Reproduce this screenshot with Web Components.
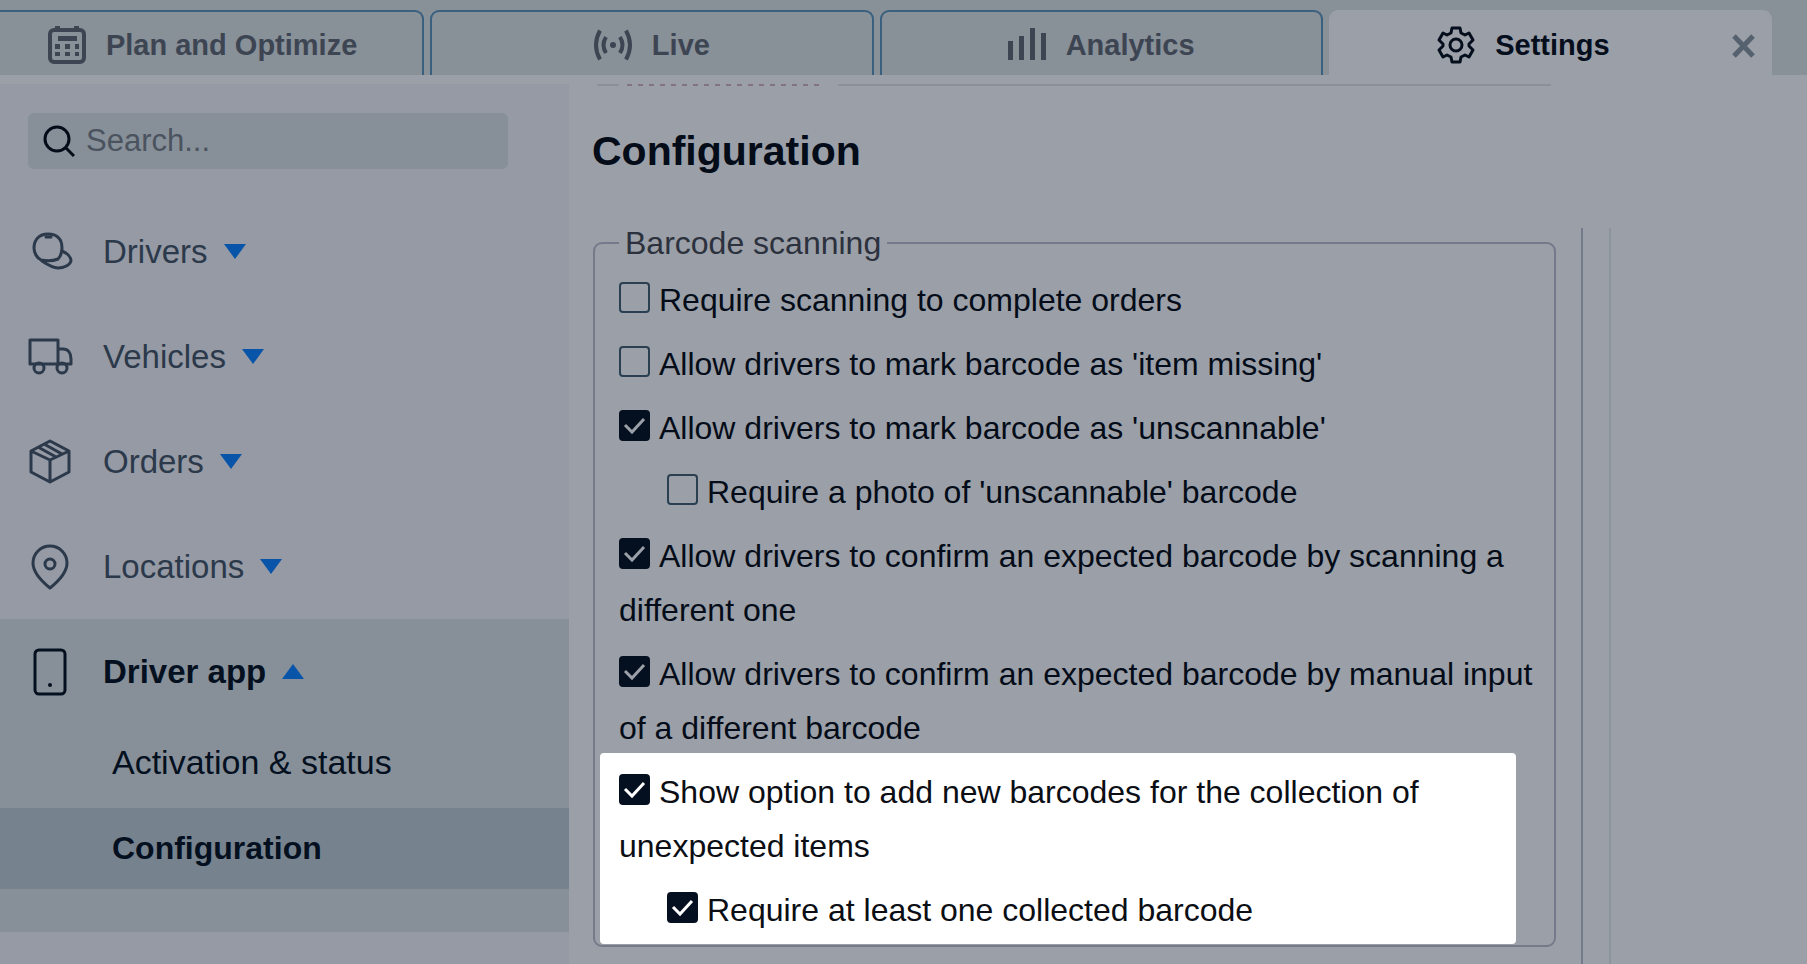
<!DOCTYPE html>
<html lang="en">
<head>
<meta charset="utf-8">
<title>Settings - Configuration</title>
<style>
  html, body { height: 100%; margin: 0; }
  body {
    background: #9b9fa7;
    color: #030c18;
    font-family: "Liberation Sans", Arial, Helvetica, sans-serif;
    overflow: hidden;
  }
</style>
</head>
<body>
<settings-app></settings-app>

<script>
const icons = {
  plan: `<rect x="2" y="4" width="34" height="32" rx="4" fill="none" stroke="currentColor" stroke-width="4"/>
    <g fill="currentColor"><rect x="7" y="0" width="5" height="5"/><rect x="26" y="0" width="5" height="5"/><rect x="10" y="10" width="19" height="5"/>
    <rect x="7" y="18" width="5" height="5"/><rect x="17" y="18" width="5" height="5"/><rect x="27" y="18" width="4" height="5"/>
    <rect x="7" y="26" width="5" height="4"/><rect x="17" y="26" width="5" height="4"/><rect x="27" y="26" width="4" height="4"/></g>`,
  live: `<circle cx="19" cy="19" r="3" fill="currentColor"/>
    <g fill="none" stroke="currentColor" stroke-width="4"><path d="M12 11q-5 8 0 16M26 11q5 8 0 16M6 4.500q-8 14.500 0 29M32 4.500q8 14.500 0 29"/></g>`,
  analytics: `<g fill="currentColor"><rect x="0" y="15" width="5" height="19"/><rect x="11" y="10" width="5" height="24"/><rect x="22" y="2" width="5" height="32"/><rect x="33" y="7" width="5" height="27"/></g>`,
  settings: `<g fill="none" stroke="currentColor" stroke-width="3" stroke-linejoin="round"><circle cx="19" cy="19" r="6"/>
    <path d="M15 2h8l1 5 4 2 4-2 4 7-4 4v2l4 4-4 7-4-2-4 2-1 5h-8l-1-5-4-2-4 2-4-7 4-4v-2l-4-4 4-7 4 2 4-2z"/></g>`,
  search: `<g fill="none" stroke="currentColor" stroke-width="3"><circle cx="14" cy="14" r="12"/><path d="M23 23l8 8"/></g>`,
  drivers: `<g fill="none" stroke="currentColor" stroke-width="3" stroke-linecap="round" stroke-linejoin="round">
    <path d="M36 20c0-9-5-14-14-14S8 12 8 20c0 5 3 10 7 12 5 1 12 1 17-1 3-3 4-7 4-11z"/>
    <path d="M36 23c5 2 9 6 9 10-1 4-7 7-13 7-5 0-10-3-16-7M20 9h5"/></g>`,
  vehicles: `<g fill="none" stroke="currentColor" stroke-width="3" stroke-linejoin="round"><path d="M4 7h28v24H4zM32 16h5c5 0 8 4 8 10v5H32"/>
    <circle cx="13" cy="35" r="5"/><circle cx="36" cy="35" r="5"/></g>`,
  orders: `<g fill="none" stroke="currentColor" stroke-width="3" stroke-linejoin="round"><path d="M24 3l19 10v21L24 44 5 34V13zM5 13l19 9 19-9M24 22v22M12 9l18 10M18 6l18 10"/></g>`,
  locations: `<g fill="none" stroke="currentColor" stroke-width="3" stroke-linejoin="round"><path d="M24 45C14 37 7 29 7 20a17 17 0 0 1 34 0c0 9-7 17-17 25z"/><circle cx="24" cy="21" r="5"/></g>`,
  app: `<rect x="9" y="2" width="30" height="44" rx="4" fill="none" stroke="currentColor" stroke-width="3"/><circle cx="24" cy="37" r="2" fill="currentColor"/>`,
  close: `<path d="M2 2l19 20M21 2L2 22" fill="none" stroke="currentColor" stroke-width="5"/>`
};

function icon(name, width, height) {
  return `<svg width="${width}" height="${height}" viewBox="0 0 ${width} ${height}" aria-hidden="true">${icons[name]}</svg>`;
}

class BaseElement extends HTMLElement {
  constructor() {
    super();
    this.attachShadow({mode: 'open'});
  }
  connectedCallback() {
    this.shadowRoot.innerHTML = this.template();
  }
}

class TabItem extends BaseElement {
  template() {
    const active = this.hasAttribute('active');
    return `<style>
        :host {
          flex: 1;
          box-sizing: border-box;
          display: flex;
          padding-top: 4px;
          border: 2px solid #3a607f;
          border-bottom: 0;
          border-radius: 9px 9px 0 0;
          color: #3d4553;
        }
        :host([active]) { background: #9b9fa7; border-color: #9b9fa7; color: #050e1d; }
        button { border: 0; padding: 0; background: none; color: inherit; font: inherit; cursor: pointer; }
        .tab {
          flex: 1;
          display: flex;
          align-items: center;
          justify-content: center;
          gap: 19px;
          font-size: 29px;
          font-weight: bold;
        }
        .close { width: 54px; color: #55616e; }
        svg { display: block; }
        .close svg { margin: auto; }
      </style>
      <button class="tab" role="tab" aria-selected="${active}">${icon(this.getAttribute('icon'), 39, 39)}<span><slot></slot></span></button>
      ${active ? `<button class="close" aria-label="Close tab">${icon('close', 23, 24)}</button>` : ''}`;
  }
}
customElements.define('tab-item', TabItem);

class TabBar extends BaseElement {
  template() {
    return `<style>
        :host {
          display: flex;
          gap: 6px;
          box-sizing: border-box;
          height: 75px;
          padding: 10px 35px 0 0;
          background: #889098;
        }
        ::slotted(:first-child) { margin-left: -19px; }
      </style>
      <slot></slot>`;
  }
}
customElements.define('tab-bar', TabBar);

class SearchBox extends BaseElement {
  template() {
    return `<style>
        :host {
          display: flex;
          align-items: center;
          gap: 11px;
          height: 56px;
          margin: 0 61px 30px 28px;
          padding-left: 15px;
          border-radius: 6px;
          background: #879099;
        }
        input {
          flex: 1;
          min-width: 0;
          padding: 0;
          border: 0;
          outline: 0;
          background: none;
          color: inherit;
          font: inherit;
          font-size: 31px;
        }
        input::placeholder { color: #4b535f; opacity: 1; }
      </style>
      ${icon('search', 32, 32)}
      <input type="search" placeholder="Search..." aria-label="Search">`;
  }
}
customElements.define('search-box', SearchBox);

class NavGroup extends BaseElement {
  template() {
    const open = this.hasAttribute('open');
    return `<style>
        :host { display: block; color: #2b394b; }
        :host([open]) { padding-bottom: 43px; background: #879099; color: #04101f; }
        button {
          display: flex;
          align-items: center;
          width: 100%;
          height: 105px;
          padding: 0 0 0 26px;
          border: 0;
          background: none;
          color: inherit;
          font: inherit;
          font-size: 33px;
          text-align: left;
          cursor: pointer;
        }
        :host([open]) button { font-weight: bold; }
        .label { margin: 0 16px 0 29px; }
        .arrow { fill: #0754a8; }
        nav { display: flex; flex-direction: column; gap: 8px; }
      </style>
      <button aria-expanded="${open}">
        ${icon(this.getAttribute('icon'), 48, 48)}
        <span class="label">${this.getAttribute('label')}</span>
        <svg class="arrow" width="22" height="15" viewBox="0 0 22 15"><path d="${open ? 'M0 15h22L11 0z' : 'M0 0h22L11 15z'}"/></svg>
      </button>
      ${open ? '<nav><slot></slot></nav>' : ''}`;
  }
}
customElements.define('nav-group', NavGroup);

class NavLink extends BaseElement {
  template() {
    return `<style>
        :host { display: block; }
        a {
          display: flex;
          align-items: center;
          height: 76px;
          padding-left: 112px;
          color: #04101f;
          font-size: 34px;
          text-decoration: none;
        }
        :host([active]) a { height: 81px; background: #76838e; font-size: 32px; font-weight: bold; }
      </style>
      <a href="#"><slot></slot></a>`;
  }
}
customElements.define('nav-link', NavLink);

class CheckOption extends BaseElement {
  template() {
    return `<style>
        :host { display: block; font-size: 32px; line-height: 54px; }
        :host([nested]) { padding-left: 48px; }
        label { display: block; }
        input {
          appearance: none;
          box-sizing: border-box;
          width: 31px;
          height: 31px;
          margin: 0 9px 0 0;
          border: 2px solid #2b3f53;
          border-radius: 4px;
        }
        input:checked {
          border-color: #04101f;
          background: #04101f;
        }
        .box { display: inline-grid; vertical-align: -2px; }
        .box > * { grid-area: 1 / 1; }
        .box svg {
          width: 31px;
          height: 31px;
          fill: none;
          stroke: var(--check-color, #9b9fa7);
          stroke-width: 3;
          pointer-events: none;
          visibility: hidden;
        }
        input:checked + svg { visibility: visible; }
      </style>
      <label><span class="box"><input type="checkbox" ${this.hasAttribute('checked') ? 'checked' : ''}><svg viewBox="0 0 31 31"><path d="M6 15l7 7L25 9"/></svg></span><slot></slot></label>`;
  }
}
customElements.define('check-option', CheckOption);

class OptionGroup extends BaseElement {
  template() {
    return `<style>
        :host { display: block; }
        fieldset {
          min-width: 0;
          margin: 0;
          padding: 15px 16px 0 24px;
          border: 2px solid #747a89;
          border-radius: 9px;
        }
        legend { padding: 0 6px 0 6px; color: #2b313d; font-size: 32px; line-height: 30px; }
        .list { display: flex; flex-direction: column; gap: 10px; }
      </style>
      <fieldset>
        <legend>${this.getAttribute('label')}</legend>
        <div class="list"><slot></slot></div>
      </fieldset>`;
  }
}
customElements.define('option-group', OptionGroup);

// White panel that pulls a few options out of the dimmed page
class SpotLight extends BaseElement {
  template() {
    return `<style>
        :host {
          --check-color: #fff;
          display: flex;
          flex-direction: column;
          gap: 10px;
          margin: -12px 22px 1px -19px;
          padding: 12px 0 7px 19px;
          border-radius: 4px;
          background: #fff;
          color: #0b0e14;
        }
      </style>
      <slot></slot>`;
  }
}
customElements.define('spot-light', SpotLight);

class SettingsApp extends BaseElement {
  template() {
    return `<style>
        :host { display: flex; flex-direction: column; height: 100vh; overflow: hidden; }
        .body { flex: 1; display: flex; min-height: 0; padding-top: 9px; }
        aside { flex: 0 0 569px; box-sizing: border-box; padding-top: 29px; background: #959aa4; }
        main { flex: 1; min-width: 0; display: flex; flex-direction: column; }
        /* bottom edge of the section scrolled under the heading */
        .edge { display: flex; align-items: flex-start; height: 3px; padding: 0 256px 0 28px; }
        .edge i { height: 2px; background: #8a909c; }
        .edge .start { width: 22px; }
        .edge .end { flex: 1; }
        .edge .cut { width: 196px; margin: 0 15px 0 8px; background: repeating-linear-gradient(90deg, #82737f 0 5px, transparent 5px 11px); }
        h1 { margin: 0; padding: 40px 0 53px 23px; font-size: 41px; line-height: 48px; }
        .content { flex: 1; display: flex; min-height: 0; }
        .scroll { flex: 1; padding-left: 24px; padding-right: 25px; border-right: 2px solid #737a89; }
        .rail { flex: 0 0 26px; border-right: 2px solid #8c949e; }
        .rest { flex: 0 0 196px; }
      </style>
      <tab-bar role="tablist">
        <tab-item icon="plan">Plan and Optimize</tab-item>
        <tab-item icon="live">Live</tab-item>
        <tab-item icon="analytics">Analytics</tab-item>
        <tab-item icon="settings" active>Settings</tab-item>
      </tab-bar>
      <div class="body">
        <aside>
          <search-box></search-box>
          <nav-group icon="drivers" label="Drivers"></nav-group>
          <nav-group icon="vehicles" label="Vehicles"></nav-group>
          <nav-group icon="orders" label="Orders"></nav-group>
          <nav-group icon="locations" label="Locations"></nav-group>
          <nav-group icon="app" label="Driver app" open>
            <nav-link>Activation &amp; status</nav-link>
            <nav-link active>Configuration</nav-link>
          </nav-group>
        </aside>
        <main>
          <div class="edge"><i class="start"></i><i class="cut"></i><i class="end"></i></div>
          <h1>Configuration</h1>
          <div class="content">
            <div class="scroll">
              <option-group label="Barcode scanning">
                <check-option>Require scanning to complete orders</check-option>
                <check-option>Allow drivers to mark barcode as 'item missing'</check-option>
                <check-option checked>Allow drivers to mark barcode as 'unscannable'</check-option>
                <check-option nested>Require a photo of 'unscannable' barcode</check-option>
                <check-option checked>Allow drivers to confirm an expected barcode by scanning a different one</check-option>
                <check-option checked>Allow drivers to confirm an expected barcode by manual input of a different barcode</check-option>
                <spot-light>
                  <check-option checked>Show option to add new barcodes for the collection of unexpected items</check-option>
                  <check-option checked nested>Require at least one collected barcode</check-option>
                </spot-light>
              </option-group>
            </div>
            <div class="rail"></div>
            <div class="rest"></div>
          </div>
        </main>
      </div>`;
  }
}
customElements.define('settings-app', SettingsApp);
</script>
</body>
</html>
